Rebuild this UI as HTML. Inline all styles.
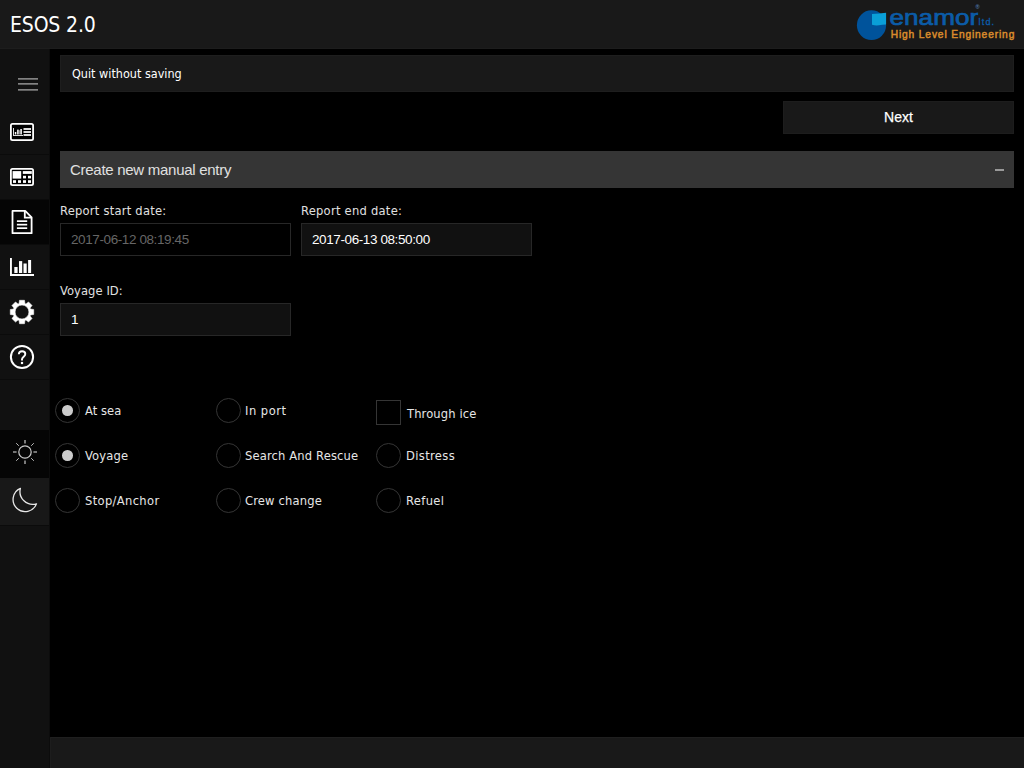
<!DOCTYPE html>
<html lang="en">
<head>
<meta charset="utf-8">
<title>ESOS 2.0</title>
<style>
*{box-sizing:border-box;margin:0;padding:0}
html,body{width:1024px;height:768px;overflow:hidden;background:#000;color:#fff;
  font-family:"DejaVu Sans Condensed","Liberation Sans",sans-serif;}
#header{position:absolute;left:0;top:0;width:1024px;height:49px;background:#191919;border-bottom:1px solid #1d1d1d}
#title{position:absolute;left:10px;top:10px;font-size:21px;line-height:30px;color:#fff;letter-spacing:-0.15px}
#logo{position:absolute;left:848px;top:0;width:176px;height:49px}
#side{position:absolute;left:0;top:49px;width:50px;height:719px;background:#111}
.sb{position:absolute;left:0;width:50px;height:45px;border-bottom:1px solid #1a1a1a}
.sb svg{position:absolute;left:0;top:0}
.sb.act{background:#050505}
#main{position:absolute;left:50px;top:49px;width:974px;height:688px;background:#000}
#footer{position:absolute;left:50px;top:737px;width:974px;height:31px;background:#191919;border-top:1px solid #1f1f1f;border-left:1px solid #1d1d1d}
#quit{position:absolute;left:60px;top:55px;width:954px;height:37px;background:#191919;border:1px solid #1e1e1e;
  font-size:12.5px;line-height:35px;padding-left:11px;color:#fff}
#next{position:absolute;left:783px;top:101px;width:231px;height:33px;background:#191919;box-shadow:inset 0 0 0 1px #1d1d1d;
  font-family:"Liberation Sans",sans-serif;font-size:14px;line-height:33px;text-align:center;color:#fff;-webkit-text-stroke:0.25px #fff}
#sect{position:absolute;left:60px;top:151px;width:954px;height:37px;background:#353535;
  font-family:"Liberation Sans",sans-serif;font-size:15px;line-height:37px;padding-left:10px;color:#e0e0e0;letter-spacing:-0.28px}
#sect .minus{position:absolute;left:935px;top:18px;width:9px;height:2px;background:#999}
.lbl{position:absolute;font-size:12.8px;line-height:18px;color:#e0e0e0;margin-top:1px}
.inp{position:absolute;width:231px;height:33px;background:#111;border:1px solid #272727;
  font-family:"Liberation Sans",sans-serif;font-size:13.5px;line-height:31px;padding-left:10px;color:#fff;letter-spacing:-0.4px}
.inp.dis{background:#000;color:#666}
.rad{position:absolute;width:25px;height:25px;border:1px solid #353535;border-radius:50%;background:#000}
.rad.on::after{content:"";position:absolute;left:6.2px;top:6.2px;width:10.6px;height:10.6px;border-radius:50%;background:#ccc}
.chk{position:absolute;width:25px;height:25px;border:1px solid #353535;background:#000}
.rl{position:absolute;font-size:12.8px;line-height:18px;color:#e6e6e6;margin-top:1px;white-space:nowrap}
</style>
</head>
<body>
<div id="header">
  <div id="title">ESOS 2.0</div>
  <svg id="logo" viewBox="0 0 176 49">
    <ellipse cx="23.5" cy="25.2" rx="14.6" ry="14.9" fill="#00539b"/>
    <path d="M24 14.1Q31 13.6 38.1 12.7V24.5Q34 24.6 31 25.3Q27 25.7 24 24.8Z" fill="#0a9fd8"/>
    <text x="41.6" y="25.3" font-family="Liberation Sans, sans-serif" font-size="21.5" fill="#0b5ca8" stroke="#0b5ca8" stroke-width="0.7" textLength="88.5" lengthAdjust="spacingAndGlyphs">enamor</text>
    <text x="130.6" y="25" font-family="Liberation Sans, sans-serif" font-size="9" fill="#0b5ca8" stroke="#0b5ca8" stroke-width="0.3" textLength="15.5" lengthAdjust="spacing">ltd.</text>
    <text x="127.4" y="9.3" font-family="Liberation Sans, sans-serif" font-size="5.5" fill="#5f92c4">®</text>
    <text x="42.7" y="37.5" font-family="Liberation Sans, sans-serif" font-size="10.2" fill="#d88a2c" stroke="#d88a2c" stroke-width="0.5" textLength="123.6" lengthAdjust="spacing">High Level Engineering</text>
  </svg>
</div>
<svg id="sidesvg" width="50" height="719" viewBox="0 49 50 719" style="position:absolute;left:0;top:49px">
  <!-- backgrounds -->
  <rect x="0" y="49" width="50" height="719" fill="#111"/>
  <rect x="0" y="199" width="49" height="45" fill="#050505"/>
  <rect x="0" y="430" width="49" height="48" fill="#050505"/>
  <rect x="0" y="478" width="49" height="47" fill="#181818"/>
  <rect x="49" y="49" width="1" height="719" fill="#0c0c0c"/>
  <!-- dividers -->
  <g fill="#0b0b0b">
    <rect x="0" y="154" width="49" height="1"/>
    <rect x="0" y="199" width="49" height="1"/>
    <rect x="0" y="244" width="49" height="1"/>
    <rect x="0" y="289" width="49" height="1"/>
    <rect x="0" y="334" width="49" height="1"/>
    <rect x="0" y="379" width="49" height="1"/>
    <rect x="0" y="525" width="49" height="1"/>
  </g>
  <!-- hamburger -->
  <g fill="#828282">
    <rect x="18" y="78" width="20" height="1.7"/>
    <rect x="18" y="83" width="20" height="1.7"/>
    <rect x="18" y="89" width="20" height="1.7"/>
  </g>
  <!-- icon 1: dashboard -->
  <rect x="10.9" y="123.9" width="22.2" height="16.2" rx="1.6" fill="#000" stroke="#fff" stroke-width="1.8"/>
  <g fill="#ddd">
    <rect x="13" y="128" width="1" height="8"/>
    <rect x="13" y="135" width="10" height="1"/>
    <rect x="14.8" y="132" width="1.5" height="2.5" fill="#fff"/>
    <rect x="17" y="129.6" width="1.8" height="4.9"/>
    <rect x="19.2" y="130.2" width="0.8" height="4.3" fill="#999"/>
    <rect x="20.2" y="129" width="1.8" height="5.5"/>
    <rect x="23.5" y="128" width="7.5" height="2"/>
    <rect x="23.5" y="131" width="7.5" height="2"/>
    <rect x="23.5" y="134" width="7.5" height="2"/>
  </g>
  <!-- icon 2: table layout -->
  <rect x="10.9" y="168.9" width="22.2" height="16.2" rx="1.6" fill="#000" stroke="#fff" stroke-width="1.8"/>
  <g fill="#fff">
    <rect x="12.6" y="171.1" width="8.6" height="7.5"/>
    <rect x="22.8" y="171.1" width="9" height="2.8"/>
    <rect x="23" y="175.8" width="3" height="2.6"/>
    <rect x="28" y="175.8" width="3" height="2.6"/>
    <rect x="13" y="180.2" width="3" height="2.7"/>
    <rect x="18" y="180.2" width="3" height="2.7"/>
    <rect x="23" y="180.2" width="3" height="2.7"/>
    <rect x="28" y="180.2" width="3" height="2.7"/>
  </g>
  <!-- icon 3: document -->
  <path d="M12.5 210.9H25.2L31.6 217.3V233.2H12.5Z" fill="none" stroke="#fff" stroke-width="1.8" stroke-linejoin="round"/>
  <path d="M24.8 211V217.6H31.5" fill="none" stroke="#fff" stroke-width="1.8"/>
  <g fill="#fff">
    <rect x="16.9" y="220.3" width="10.3" height="1.7"/>
    <rect x="16.9" y="223.8" width="10.3" height="1.7"/>
    <rect x="16.9" y="227.3" width="10.3" height="1.7"/>
  </g>
  <!-- icon 4: bar chart -->
  <g fill="#fff">
    <rect x="10" y="258" width="1.9" height="18"/>
    <rect x="10" y="274" width="24" height="2"/>
    <rect x="14.3" y="267" width="3.3" height="6"/>
    <rect x="19" y="261.1" width="3.2" height="11.9"/>
    <rect x="23.5" y="263.5" width="3.2" height="9.5"/>
    <rect x="28.1" y="260" width="3" height="13"/>
  </g>
  <!-- icon 5: gear -->
  <path d="M19.06 303.50L19.47 300.27L24.53 300.27L24.94 303.50L25.93 303.90L28.50 301.92L32.08 305.50L30.10 308.07L30.50 309.06L33.73 309.47L33.73 314.53L30.50 314.94L30.10 315.93L32.08 318.50L28.50 322.08L25.93 320.10L24.94 320.50L24.53 323.73L19.47 323.73L19.06 320.50L18.07 320.10L15.50 322.08L11.92 318.50L13.90 315.93L13.50 314.94L10.27 314.53L10.27 309.47L13.50 309.06L13.90 308.07L11.92 305.50L15.50 301.92L18.07 303.90ZM28.9 312A6.9 6.9 0 1 0 15.1 312A6.9 6.9 0 1 0 28.9 312Z" fill="#fff" fill-rule="evenodd" stroke="#fff" stroke-width="0.5" stroke-linejoin="round"/>
  <!-- icon 6: help -->
  <circle cx="22" cy="357" r="11.1" fill="none" stroke="#fff" stroke-width="2"/>
  <path d="M18.8 354.2C18.9 352.2 20.3 351.2 22.1 351.2C23.9 351.2 25.3 352.3 25.3 354C25.3 356.4 22 357 22 359.3V360.4" fill="none" stroke="#fff" stroke-width="1.9"/>
  <rect x="20.9" y="361.9" width="2.2" height="2.2" fill="#fff"/>
  <!-- sun -->
  <g stroke="#aaa" fill="none">
    <circle cx="25" cy="452" r="6.2" stroke-width="1.2" stroke="#ccc"/>
    <path d="M25 440V443.6M25 460.4V464M13 452H16.6M33.4 452H37" stroke-width="1.6" stroke="#999"/>
    <path d="M16.2 443.2L18.8 445.8M31.2 445.8L33.8 443.2M16.2 460.8L18.8 458.2M31.2 458.2L33.8 460.8" stroke-width="1" stroke="#bbb"/>
  </g>
  <!-- moon -->
  <path d="M20.4 488.4A12.1 12.1 0 1 0 36.5 503.8A12.8 12.8 0 0 1 20.4 488.4Z" fill="none" stroke="#e8e8e8" stroke-width="1.3" stroke-linejoin="round"/>
</svg>
<div id="main"></div>
<div id="footer"></div>

<div id="quit">Quit without saving</div>
<div id="next">Next</div>
<div id="sect">Create new manual entry<span class="minus"></span></div>

<div class="lbl" style="left:60px;top:201px;letter-spacing:0.24px">Report start date:</div>
<div class="inp dis" style="left:60px;top:223px">2017-06-12 08:19:45</div>
<div class="lbl" style="left:301px;top:201px;letter-spacing:0.26px">Report end date:</div>
<div class="inp" style="left:301px;top:223px">2017-06-13 08:50:00</div>
<div class="lbl" style="left:60px;top:281px;letter-spacing:0.08px">Voyage ID:</div>
<div class="inp" style="left:60px;top:303px">1</div>

<div class="rad on" style="left:55px;top:398px"></div><div class="rl" style="left:85px;top:401px;letter-spacing:0.05px">At sea</div>
<div class="rad" style="left:216px;top:398px"></div><div class="rl" style="left:245px;top:401px;letter-spacing:0.5px">In port</div>
<div class="chk" style="left:376px;top:400px"></div><div class="rl" style="left:407px;top:404px;letter-spacing:0.13px">Through ice</div>

<div class="rad on" style="left:55px;top:443px"></div><div class="rl" style="left:85px;top:446px;letter-spacing:0.17px">Voyage</div>
<div class="rad" style="left:216px;top:443px"></div><div class="rl" style="left:245px;top:446px;letter-spacing:0.16px">Search And Rescue</div>
<div class="rad" style="left:376px;top:443px"></div><div class="rl" style="left:406px;top:446px;letter-spacing:0.36px">Distress</div>

<div class="rad" style="left:55px;top:488px"></div><div class="rl" style="left:85px;top:491px;letter-spacing:0.35px">Stop/Anchor</div>
<div class="rad" style="left:216px;top:488px"></div><div class="rl" style="left:245px;top:491px;letter-spacing:0.17px">Crew change</div>
<div class="rad" style="left:376px;top:488px"></div><div class="rl" style="left:406px;top:491px;letter-spacing:0.36px">Refuel</div>
</body>
</html>
